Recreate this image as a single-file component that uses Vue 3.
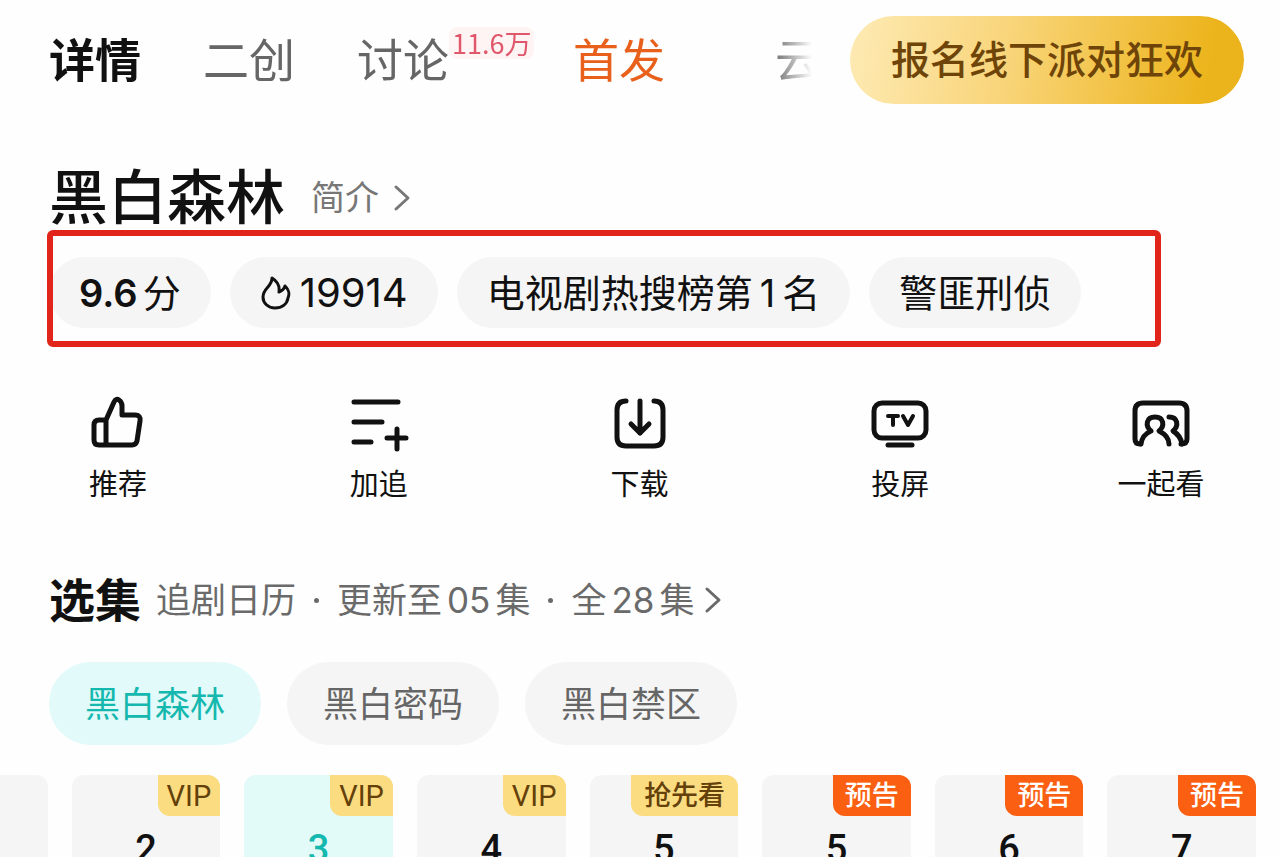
<script setup>
import { ref } from 'vue'

const activeTab = ref('detail')
const activeSeason = ref('黑白森林')
const activeEpisode = ref(2)

const tabs = [
    { id: 'detail', label: '详情' },
    { id: 'create', label: '二创' },
    { id: 'discuss', label: '讨论', count: '11.6万' },
    { id: 'first', label: '首发' },
    { id: 'cloud', label: '云' }
]

const seasons = ['黑白森林', '黑白密码', '黑白禁区']

const episodes = [
    { no: 1 },
    { no: 2, badge: 'VIP', type: 'vip' },
    { no: 3, badge: 'VIP', type: 'vip' },
    { no: 4, badge: 'VIP', type: 'vip' },
    { no: 5, badge: '抢先看', type: 'early' },
    { no: 5, badge: '预告', type: 'trailer' },
    { no: 6, badge: '预告', type: 'trailer' },
    { no: 7, badge: '预告', type: 'trailer' }
]
</script>

<template>
    <main class="page">
        <header class="header">
            <nav class="tabs">
                <button
                    v-for="tab in tabs"
                    :key="tab.id"
                    class="tab"
                    :class="['tab-' + tab.id, { active: activeTab === tab.id }]"
                    @click="activeTab = tab.id"
                >
                    {{ tab.label }}
                    <span v-if="tab.count" class="tab-count">{{ tab.count }}</span>
                </button>
            </nav>
            <button class="party-btn">报名线下派对狂欢</button>
        </header>

        <section class="title-row">
            <h1 class="title">黑白森林</h1>
            <a href="#" class="intro">
                简介
                <svg class="chevron" viewBox="0 0 18 28">
                    <path d="M3 3 L15 14 L3 25" />
                </svg>
            </a>
        </section>

        <section class="chips">
            <span class="chip"><b class="score">9.6</b>分</span>
            <span class="chip heat">
                <svg class="flame" viewBox="0 0 32 36">
                    <path
                        d="M12 3 C17 6 20 10 19 17 C22 16 24 14 25 11 C29 15 30 18 28 23 C27 29 22 33 15 33 C8 33 3 28 3 22 C3 13 12 12 12 3 Z"
                    />
                </svg>
                19914
            </span>
            <span class="chip"><span>电视剧热搜榜第</span><span class="rank">1</span><span>名</span></span>
            <span class="chip">警匪刑侦</span>
        </section>

        <section class="actions">
            <button class="action">
                <svg class="action-icon" viewBox="0 0 60 60">
                    <path
                        d="M18 53 H11 Q6 53 6 48 V33 Q6 28 11 28 H18 L26 10 Q28 6 31 8 Q34 10 34 14 V23 H47 Q53 23 52 29 L49 49 Q48 53 44 53 Z M18 28 V53"
                    />
                </svg>
                推荐
            </button>
            <button class="action">
                <svg class="action-icon" viewBox="0 0 60 60">
                    <path d="M5 10 H49 M5 30 H33 M5 50 H22 M38 46 H57 M48 37 V57" />
                </svg>
                加追
            </button>
            <button class="action">
                <svg class="action-icon" viewBox="0 0 60 60">
                    <path
                        d="M16 9 Q7 9 7 18 V45 Q7 54 16 54 H44 Q53 54 53 45 V18 Q53 9 44 9 M30 9 V41 M21 32 L30 41 L39 32"
                    />
                </svg>
                下载
            </button>
            <button class="action">
                <svg class="action-icon" viewBox="0 0 60 60">
                    <rect x="4" y="11" width="52" height="35" rx="8" />
                    <path d="M18 53 H42" />
                    <path class="thin" d="M18 24 H28 M23 24 V33 M33 24 L38 33 L43 24" />
                </svg>
                投屏
            </button>
            <button class="action">
                <svg class="action-icon" viewBox="0 0 60 60">
                    <path
                        d="M9 52 Q4 52 4 47 V19 Q4 11 12 11 H48 Q56 11 56 19 V47 Q56 52 50 52"
                    />
                    <path
                        d="M10 52 C11 46 13 42 20 39 C14 34 15 25 24 25 C33 25 34 34 28 39 C34 42 38 46 38 52 M38 25 C47 25 48 34 42 39 C47 42 50 46 51 52"
                    />
                </svg>
                一起看
            </button>
        </section>

        <section class="episode-head">
            <h2 class="episode-title">选集</h2>
            <a href="#" class="episode-meta">
                <span>追剧日历</span>
                <i class="dot"></i>
                <span class="meta-group"><span>更新至</span><span>05</span><span>集</span></span>
                <i class="dot"></i>
                <span class="meta-group"><span>全</span><span>28</span><span>集</span></span>
                <svg class="chevron" viewBox="0 0 18 28">
                    <path d="M3 3 L15 14 L3 25" />
                </svg>
            </a>
        </section>

        <div class="seasons">
            <button
                v-for="season in seasons"
                :key="season"
                class="season"
                :class="{ active: activeSeason === season }"
                @click="activeSeason = season"
            >
                {{ season }}
            </button>
        </div>

        <div class="episodes">
            <button
                v-for="(item, index) in episodes"
                :key="index"
                class="episode"
                :class="{ active: activeEpisode === index }"
                @click="activeEpisode = index"
            >
                {{ item.no }}
                <span v-if="item.badge" class="badge" :class="item.type">{{ item.badge }}</span>
            </button>
        </div>
    </main>
</template>

<style>
body {
    margin: 0;
    background: #fefefe;
}
</style>

<style scoped>
.page {
    height: 100vh;
    overflow: hidden;
    color: #111;
    font-family: Inter, 'Noto Sans CJK SC', sans-serif;
}

button {
    padding: 0;
    border: none;
    background: none;
    color: inherit;
    font-family: inherit;
    white-space: nowrap;
    cursor: pointer;
}

a {
    color: inherit;
    text-decoration: none;
}

svg {
    fill: none;
    stroke: currentColor;
    stroke-linecap: round;
    stroke-linejoin: round;
}

.header {
    display: flex;
    align-items: center;
    gap: 38px;
    padding: 16px 36px 0 49px;
}

.tabs {
    flex: 1;
    min-width: 0;
    height: 88px;
    display: flex;
    align-items: center;
    gap: 62px;
    overflow: hidden;
    mask-image: linear-gradient(to right, #000 calc(100% - 40px), transparent);
}

.tab {
    position: relative;
    flex: none;
    color: #666;
    font-size: 46px;
    line-height: 62px;

    &.active {
        color: #111;
        font-weight: bold;
    }
}

.tab-first {
    margin-left: 62px;
    color: #e8601c;
}

.tab-cloud {
    margin-left: 48px;
}

.tab-count {
    position: absolute;
    left: 100%;
    top: -2px;
    padding: 0 3px;
    border-radius: 8px;
    background: #fff4f4;
    color: #e0566a;
    font-family: 'Noto Sans CJK SC', sans-serif;
    font-size: 27px;
    line-height: 32px;
}

.party-btn {
    height: 88px;
    padding: 0 41px;
    border-radius: 44px;
    background: linear-gradient(100deg, #fdeab4, #f9d57a 40%, #ecb41c 90%);
    color: #6e4408;
    font-size: 39px;
    font-weight: 500;
    line-height: 44px;
}

.title-row {
    display: flex;
    align-items: center;
    gap: 26px;
    margin: 54px 49px 0;
}

.title {
    margin: 0;
    font-size: 59px;
    font-weight: 500;
    line-height: 80px;
}

.intro {
    display: flex;
    align-items: center;
    gap: 14px;
    color: #777;
    font-size: 34px;
    line-height: 44px;
}

.chevron {
    width: 18px;
    height: 28px;
    stroke-width: 3;
}

/* red frame drawn over the tag row */
.chips {
    position: relative;
    display: flex;
    gap: 19px;
    margin: 19px 49px 0;

    &::after {
        content: '';
        position: absolute;
        inset: -27px 70px -19px -2px;
        border: 6px solid #e1251b;
        border-radius: 6px;
        pointer-events: none;
    }
}

.chip {
    display: flex;
    align-items: center;
    gap: 5px;
    height: 71px;
    padding: 0 30px;
    border-radius: 36px;
    background: #f5f5f5;
    font-size: 38px;
    line-height: 44px;
    white-space: nowrap;
}

.score {
    font-weight: 600;
}

.heat {
    gap: 8px;
    font-size: 40px;
}

.rank {
    margin: 0 2px;
}

.flame {
    width: 32px;
    height: 36px;
    stroke-width: 3;
}

.actions {
    display: flex;
    justify-content: space-between;
    margin: 64px 50px 0 49px;
}

.action {
    display: flex;
    flex-direction: column;
    align-items: center;
    gap: 11px;
    width: 138px;
    font-size: 29px;
    line-height: 44px;
}

.action-icon {
    width: 60px;
    height: 60px;
    stroke-width: 5;

    .thin {
        stroke-width: 4;
    }
}

.episode-head {
    display: flex;
    align-items: center;
    gap: 15px;
    margin: 63px 49px 0;
}

.episode-title {
    margin: 0;
    font-size: 46px;
    font-weight: bold;
    line-height: 60px;
}

.episode-meta {
    display: flex;
    align-items: center;
    gap: 18px;
    color: #6a6a6a;
    font-size: 35px;
    line-height: 60px;

    .chevron {
        margin-left: -8px;
    }
}

.meta-group {
    display: flex;
    gap: 5px;
}

.dot {
    width: 5px;
    height: 5px;
    border-radius: 50%;
    background: currentColor;
}

.seasons {
    display: flex;
    gap: 26px;
    margin: 32px 49px 0;
}

.season {
    height: 83px;
    padding: 0 36px;
    border-radius: 42px;
    background: #f5f5f5;
    color: #666;
    font-size: 35px;
    line-height: 44px;

    &.active {
        background: #e2fafa;
        color: #14b8ae;
    }
}

.episodes {
    display: grid;
    grid-template-columns: repeat(8, 1fr);
    gap: 24px;
    margin: 30px 24px 0 -101px;
}

.episode {
    position: relative;
    height: 148px;
    border-radius: 12px;
    background: #f5f5f5;
    font-family: Roboto, sans-serif;
    font-size: 38px;
    font-weight: 500;

    &.active {
        background: #e2faf8;
        color: #14b8ae;
    }
}

.badge {
    position: absolute;
    top: 0;
    right: 0;
    padding: 2px 13px 0;
    border-radius: 0 12px 0 12px;
    background: #fcdc80;
    color: #64400a;
    font-family: Roboto, 'Noto Sans CJK SC', sans-serif;
    font-size: 27px;
    font-weight: 500;
    line-height: 39px;

    &.vip {
        padding: 2px 9px 0;
        font-size: 29px;
        font-weight: 400;
    }

    &.trailer {
        padding: 2px 12px 0;
        background: #fb5f12;
        color: #fff;
    }
}
</style>
